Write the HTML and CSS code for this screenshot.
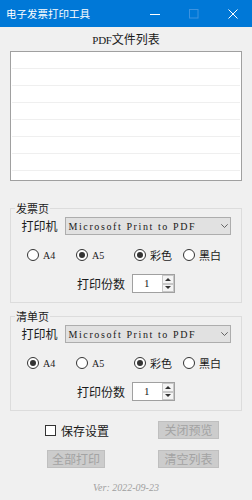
FILE: index.html
```html
<!DOCTYPE html>
<html lang="zh-CN">
<head>
    <meta charset="UTF-8">
    <meta name="viewport" content="width=device-width, initial-scale=1.0">
    <title>电子发票打印工具</title>
    <link rel="stylesheet" href="styles.css">
</head>
<body>
    <div class="titlebar">
        <span class="title">电子发票打印工具</span>
        <div class="controls">
            <span class="ctrl">
                <svg width="10" height="10" viewBox="0 0 10 10"><path d="M0 5.5h10" stroke="#fff" stroke-width="1"/></svg>
            </span>
            <span class="ctrl">
                <svg width="10" height="10" viewBox="0 0 10 10"><rect x="0.5" y="0.5" width="8.5" height="8.5" fill="none" stroke="#3d93e0" stroke-width="1"/></svg>
            </span>
            <span class="ctrl">
                <svg width="10" height="10" viewBox="0 0 10 10"><path d="M0.5 0.5l9 9M9.5 0.5l-9 9" stroke="#fff" stroke-width="1"/></svg>
            </span>
        </div>
    </div>

    <div class="window">
        <div class="list-title"><span class="latin">PDF</span>文件列表</div>

        <div class="file-list">
            <div class="row"></div>
            <div class="row"></div>
            <div class="row"></div>
            <div class="row"></div>
            <div class="row"></div>
            <div class="row"></div>
            <div class="row"></div>
            <div class="row"></div>
        </div>

        <!-- 发票页 -->
        <fieldset class="group">
            <legend>发票页</legend>
            <div class="printer-row">
                <span class="label">打印机</span>
                <div class="select">
                    <span>Microsoft Print to PDF</span>
                    <svg width="7" height="4" viewBox="0 0 7 4"><path d="M0.3 0.3l3.2 3.2 3.2-3.2" fill="none" stroke="#555" stroke-width="0.9"/></svg>
                </div>
            </div>
            <div class="radio-row">
                <label class="radio"><span class="dot"></span>A4</label>
                <label class="radio checked"><span class="dot"></span>A5</label>
                <label class="radio checked cn"><span class="dot"></span>彩色</label>
                <label class="radio cn"><span class="dot"></span>黑白</label>
            </div>
            <div class="copies-row">
                <span class="label">打印份数</span>
                <div class="spin">
                    <span class="value">1</span>
                    <div class="spin-btns"><span class="up"></span><span class="down"></span></div>
                </div>
            </div>
        </fieldset>

        <!-- 清单页 -->
        <fieldset class="group">
            <legend>清单页</legend>
            <div class="printer-row">
                <span class="label">打印机</span>
                <div class="select">
                    <span>Microsoft Print to PDF</span>
                    <svg width="7" height="4" viewBox="0 0 7 4"><path d="M0.3 0.3l3.2 3.2 3.2-3.2" fill="none" stroke="#555" stroke-width="0.9"/></svg>
                </div>
            </div>
            <div class="radio-row">
                <label class="radio checked"><span class="dot"></span>A4</label>
                <label class="radio"><span class="dot"></span>A5</label>
                <label class="radio checked cn"><span class="dot"></span>彩色</label>
                <label class="radio cn"><span class="dot"></span>黑白</label>
            </div>
            <div class="copies-row">
                <span class="label">打印份数</span>
                <div class="spin">
                    <span class="value">1</span>
                    <div class="spin-btns"><span class="up"></span><span class="down"></span></div>
                </div>
            </div>
        </fieldset>

        <div class="actions">
            <label class="check"><span class="box"></span>保存设置</label>
            <button disabled>关闭预览</button>
            <button disabled class="print-all">全部打印</button>
            <button disabled>清空列表</button>
        </div>

        <div class="version">Ver: 2022-09-23</div>
    </div>
</body>
</html>
```

FILE: styles.css
```css
* {
    box-sizing: border-box;
}

body {
    margin: 0;
    width: 252px;
    height: 500px;
    overflow: hidden;
    background: #f0f0f0;
    color: #1a1a1a;
    font-family: "Noto Sans CJK SC", sans-serif;
}

/* title bar */
.titlebar {
    height: 27px;
    background: #0078d7;
    color: #fff;
    display: flex;
    align-items: center;
}

.title {
    flex: 1;
    padding-left: 6px;
    font-size: 10.5px;
    line-height: 27px;
}

.controls {
    display: flex;
    height: 27px;
}

.ctrl {
    width: 39px;
    display: flex;
    align-items: center;
    justify-content: center;
}

/* window body */
.window {
    padding: 5px 10px 0;
}

.list-title {
    text-align: center;
    font-size: 12px;
    line-height: 14px;
    margin-bottom: 4px;
}

.list-title .latin {
    font-family: "Liberation Serif", serif;
    font-size: 11px;
    letter-spacing: -0.3px;
}

.file-list {
    height: 130px;
    padding: 0 1px;
    background: #fff;
    border: 1px solid #a0a0a0;
    overflow: hidden;
}

.file-list .row {
    height: 17px;
    border-bottom: 1px solid #efefef;
}

/* group boxes */
.group {
    margin: 21px 0 0;
    padding: 2px 0 9px;
    min-width: 0;
    border: 1px solid #dcdcdc;
}

.group + .group {
    margin-top: 7px;
}

.group legend {
    margin-left: 4px;
    padding: 0 1px;
    font-size: 11px;
    line-height: 13px;
}

.label {
    font-size: 12px;
    line-height: 18px;
}

.printer-row {
    display: flex;
    justify-content: center;
    align-items: center;
    gap: 7px;
    height: 18px;
}

.select {
    width: 166px;
    height: 18px;
    padding: 0 2px 0 3px;
    display: flex;
    align-items: center;
    justify-content: space-between;
    background: #e1e1e1;
    border: 1px solid #adadad;
    font-family: "Liberation Serif", serif;
    font-size: 10px;
    letter-spacing: 1.6px;
}

.radio-row {
    display: grid;
    grid-template-columns: 49px 58px 49px auto;
    align-items: center;
    height: 18px;
    margin: 11px 0 0 16px;
}

.radio {
    display: flex;
    align-items: center;
    gap: 4px;
    font-family: "Liberation Serif", serif;
    font-size: 10px;
}

.radio.cn {
    font-family: "Noto Sans CJK SC", sans-serif;
    font-size: 11px;
}

.dot {
    width: 12px;
    height: 12px;
    border: 1px solid #333;
    border-radius: 50%;
    background: #fff;
    display: flex;
    align-items: center;
    justify-content: center;
}

.radio.checked .dot::after {
    content: "";
    width: 6px;
    height: 6px;
    border-radius: 50%;
    background: #333;
}

.copies-row {
    display: flex;
    justify-content: center;
    align-items: center;
    gap: 7px;
    height: 19px;
    margin-top: 10px;
}

.spin {
    width: 43px;
    height: 19px;
    display: flex;
    background: #fff;
    border: 1px solid #a0a0a0;
}

.spin .value {
    flex: 1;
    padding-left: 11px;
    font-family: "Liberation Serif", serif;
    font-size: 11px;
    line-height: 17px;
}

.spin-btns {
    width: 12px;
    display: flex;
    flex-direction: column;
}

.spin-btns span {
    flex: 1;
    display: flex;
    align-items: center;
    justify-content: center;
    background: #f4f4f4;
    border: 1px solid #c8c8c8;
}

.spin-btns .up::after {
    content: "";
    border-left: 3px solid transparent;
    border-right: 3px solid transparent;
    border-bottom: 3px solid #333;
}

.spin-btns .down::after {
    content: "";
    border-left: 3px solid transparent;
    border-right: 3px solid transparent;
    border-top: 3px solid #333;
}

/* bottom actions */
.actions {
    display: grid;
    grid-template-columns: 113px 61px;
    row-gap: 11px;
    margin: 10px 0 0 35px;
}

.check {
    display: flex;
    align-items: center;
    gap: 5px;
    height: 18px;
    font-size: 12px;
}

.check .box {
    width: 11px;
    height: 11px;
    background: #fff;
    border: 1px solid #333;
}

button {
    height: 18px;
    padding: 0;
    background: #cccccc;
    border: 1px solid #bfbfbf;
    color: #a3a3a3;
    font-family: "Noto Sans CJK SC", sans-serif;
    font-size: 12px;
    line-height: 16px;
}

.print-all {
    width: 58px;
    margin-left: 2px;
}

.version {
    margin-top: 13px;
    text-align: center;
    font-family: "Liberation Serif", serif;
    font-style: italic;
    font-size: 10px;
    line-height: 14px;
    color: #a0a0a0;
}
```
